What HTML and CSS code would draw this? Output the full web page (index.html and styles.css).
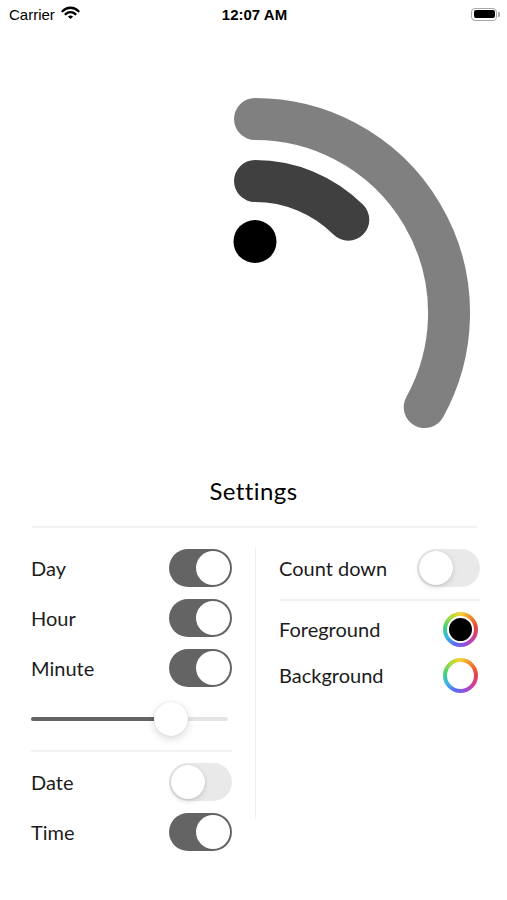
FILE: index.html
```html
<!DOCTYPE html>
<html lang="en">
<head>
    <meta charset="UTF-8">
    <meta name="viewport" content="width=device-width, initial-scale=1.0">
    <title>Clock Settings</title>
    <link rel="stylesheet" href="styles.css">
</head>
<body>

<div class="status-bar">
    <div class="carrier">
        Carrier
        <svg class="wifi" width="19" height="14" viewBox="0 0 19 14">
            <path d="M1.5 5.2 A11 11 0 0 1 17.5 5.2" fill="none" stroke="#000" stroke-width="2.4" stroke-linecap="round"/>
            <path d="M4.6 8.2 A6.8 6.8 0 0 1 14.4 8.2" fill="none" stroke="#000" stroke-width="2.4" stroke-linecap="round"/>
            <path d="M9.5 13 L6.9 10.6 A3.8 3.8 0 0 1 12.1 10.6 Z" fill="#000"/>
        </svg>
    </div>
    <div class="time">12:07 AM</div>
    <div class="battery-wrap">
        <div class="battery"><div class="battery-level"></div></div>
        <div class="battery-nub"></div>
    </div>
</div>

<!-- Clock face: three progress rings sharing one centre -->
<svg class="dial" width="507" height="440" viewBox="0 28 507 440">
    <path d="M255 119 A194 194 0 0 1 424.7 407.1" fill="none" stroke="#808080" stroke-width="42" stroke-linecap="round"/>
    <path d="M255 181 A132 132 0 0 1 348.3 219.7" fill="none" stroke="#404040" stroke-width="42" stroke-linecap="round"/>
    <circle cx="255" cy="241.5" r="21.5" fill="#000"/>
</svg>

<div class="settings-title">Settings</div>
<div class="rule"></div>

<div class="panel">
    <div class="column">
        <div class="row">
            <span class="label">Day</span>
            <div class="toggle on"></div>
        </div>
        <div class="row">
            <span class="label">Hour</span>
            <div class="toggle on"></div>
        </div>
        <div class="row">
            <span class="label">Minute</span>
            <div class="toggle on"></div>
        </div>
        <div class="slider">
            <div class="slider-track"></div>
            <div class="slider-fill" style="width: 140px"></div>
            <div class="slider-thumb" style="left: 123px"></div>
        </div>
        <div class="rule small"></div>
        <div class="row">
            <span class="label">Date</span>
            <div class="toggle"></div>
        </div>
        <div class="row">
            <span class="label">Time</span>
            <div class="toggle on"></div>
        </div>
    </div>

    <div class="divider"></div>

    <div class="column">
        <div class="row">
            <span class="label">Count down</span>
            <div class="toggle"></div>
        </div>
        <div class="rule small"></div>
        <div class="row color-row">
            <span class="label">Foreground</span>
            <div class="color-well"><div class="swatch black"></div></div>
        </div>
        <div class="row color-row">
            <span class="label">Background</span>
            <div class="color-well"><div class="swatch white"></div></div>
        </div>
    </div>
</div>

</body>
</html>
```

FILE: styles.css
```css
* {
    margin: 0;
    padding: 0;
    box-sizing: border-box;
}

body {
    font-family: Lato, 'Noto Sans', sans-serif;
    background: #fff;
    color: #1c1c1c;
    width: 507px;
    overflow: hidden;
}

/* Status bar */
.status-bar {
    display: grid;
    grid-template-columns: 1fr auto 1fr;
    align-items: center;
    height: 28px;
    padding: 0 7px 0 9px;
    font-family: 'Liberation Sans', Arial, sans-serif;
    font-size: 15px;
    color: #000;
}

.carrier {
    display: flex;
    align-items: center;
    gap: 6px;
}

.wifi {
    margin-top: -2px;
}

.time {
    font-weight: 700;
    text-align: center;
}

.battery-wrap {
    display: flex;
    align-items: center;
    justify-content: flex-end;
    gap: 1px;
}

.battery {
    width: 26px;
    height: 13px;
    border: 1px solid #a8a8a8;
    border-radius: 4px;
    padding: 1.5px;
}

.battery-level {
    width: 100%;
    height: 100%;
    background: #000;
    border-radius: 2px;
}

.battery-nub {
    width: 2px;
    height: 5px;
    background: #a8a8a8;
    border-radius: 0 1px 1px 0;
}

/* Dial */
.dial {
    display: block;
}

/* Settings */
.settings-title {
    text-align: center;
    font-size: 24px;
    line-height: 28px;
    letter-spacing: 0.4px;
    color: #000;
    margin-top: 9px;
}

.rule {
    height: 2px;
    background: #f2f2f2;
    margin: 21px 30px 0 32px;
}

.rule.small {
    height: 1.5px;
    margin: 0;
}

.panel {
    display: grid;
    grid-template-columns: 201px 1px 201px;
    column-gap: 23px;
    padding: 0 27px 0 31px;
    margin-top: 21px;
}

.column {
    display: flex;
    flex-direction: column;
}

.row {
    display: flex;
    align-items: center;
    justify-content: space-between;
    height: 38px;
    margin-bottom: 12px;
}

.label {
    font-size: 20px;
    color: #1c1c1c;
}

.divider {
    width: 1px;
    height: 272px;
    background: #efefef;
    margin-top: -2px;
}

/* Switches */
.toggle {
    position: relative;
    width: 63px;
    height: 38px;
    border-radius: 19px;
    background: #e9e9ea;
}

.toggle::after {
    content: '';
    position: absolute;
    top: 2px;
    left: 2px;
    width: 34px;
    height: 34px;
    border-radius: 50%;
    background: #fff;
    box-shadow: 0 2px 5px rgba(0, 0, 0, 0.15), 0 0 1px rgba(0, 0, 0, 0.15);
}

.toggle.on {
    background: #646464;
}

.toggle.on::after {
    left: 27px;
    box-shadow: none;
}

/* Slider */
.slider {
    position: relative;
    height: 38px;
    margin: 1px 0 12px 0;
}

.slider-track,
.slider-fill {
    position: absolute;
    top: 17px;
    left: 0;
    height: 4px;
    border-radius: 2px;
}

.slider-track {
    width: 197px;
    background: #e5e5e5;
}

.slider-fill {
    background: #646464;
}

.slider-thumb {
    position: absolute;
    top: 2px;
    width: 34px;
    height: 34px;
    border-radius: 50%;
    background: #fff;
    box-shadow: 0 3px 8px rgba(0, 0, 0, 0.15), 0 0 1px rgba(0, 0, 0, 0.2);
}

.column .rule.small + .row {
    margin-top: 11px;
}

/* Color wells */
.color-row {
    height: 35px;
    margin-bottom: 11px;
    padding-right: 2px;
}

.color-well {
    width: 35px;
    height: 35px;
    border-radius: 50%;
    background: conic-gradient(#f6d23a, #f08a2c, #e8453c, #d63c8e, #9b4bd8, #5a6cf0, #3ab7e8, #46d07a, #a8de3a, #f6d23a);
    padding: 4px;
}

.swatch {
    width: 100%;
    height: 100%;
    border-radius: 50%;
    border: 2.5px solid #fff;
}

.swatch.black {
    background: #000;
}

.swatch.white {
    background: #fff;
}
```
